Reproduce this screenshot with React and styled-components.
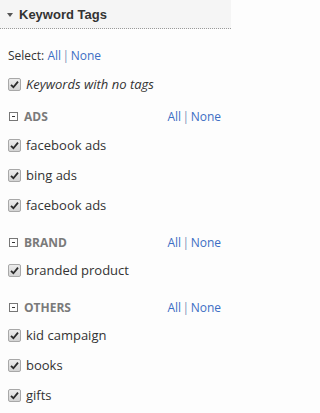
import React from "react";
import styled, { createGlobalStyle } from "styled-components";

const GlobalStyle = createGlobalStyle`
  html, body {
    margin: 0;
    padding: 0;
    background: #fdfdfd;
  }
  body {
    font-family: "Open Sans", "Liberation Sans", Arial, sans-serif;
    color: #333;
  }
`;

const Panel = styled.div`
  width: 231px;
  min-height: 413px;
  background: #fdfdfd;
`;

const PanelHeader = styled.div`
  height: 29px;
  background: #f5f5f5;
  border-bottom: 1px dotted #9a9a9a;
  display: flex;
  align-items: center;
  padding-left: 7px;
  box-sizing: border-box;
`;

const Caret = styled.span`
  width: 0;
  height: 0;
  border-left: 3.5px solid transparent;
  border-right: 3.5px solid transparent;
  border-top: 4px solid #555;
  margin-right: 6px;
  margin-top: 1px;
`;

const HeaderTitle = styled.h3`
  margin: 0;
  font-family: "Liberation Sans", Arial, sans-serif;
  font-weight: 700;
  font-size: 13px;
  color: #333;
`;

const Body = styled.div`
  padding: 16px 10px 0 8px;
`;

const SelectRow = styled.div`
  height: 20px;
  margin-bottom: 4px;
  display: flex;
  align-items: center;
  font-size: 12px;
`;

const Link = styled.a`
  color: #3c6ec4;
  text-decoration: none;
  cursor: pointer;
`;

const Sep = styled.span`
  color: #7e8fb5;
  margin: 0 1.5px;
`;

const Row = styled.label`
  height: 30px;
  display: flex;
  align-items: center;
  gap: 5px;
  font-size: 13px;
  font-style: ${(p) => (p.$italic ? "italic" : "normal")};
  color: #333;
  cursor: pointer;
`;

const Box = styled.span`
  width: 11px;
  height: 11px;
  border: 1px solid #a8a8a8;
  border-radius: 2px;
  background: linear-gradient(#ececec, #d4d4d4);
  display: flex;
  align-items: center;
  justify-content: center;
  flex-shrink: 0;
`;

const Section = styled.section`
  margin-top: ${(p) => (p.$first ? "4px" : "8px")};
`;

const SectionHead = styled.div`
  height: 27px;
  padding-top: ${(p) => (p.$first ? "0" : "2px")};
  box-sizing: border-box;
  display: flex;
  align-items: center;
  justify-content: space-between;
`;

const HeadLeft = styled.div`
  display: flex;
  align-items: center;
  gap: 6px;
  padding-left: 1px;
`;

const Toggle = styled.span`
  width: 7px;
  height: 7px;
  border: 1px solid #777;
  display: flex;
  align-items: center;
  justify-content: center;
  &::after {
    content: "";
    width: 3px;
    height: 1px;
    background: #333;
  }
`;

const SectionTitle = styled.span`
  font-weight: 700;
  font-size: 12px;
  color: #7a7a7a;
`;

const HeadLinks = styled.div`
  font-size: 12px;
  display: flex;
  align-items: center;
`;

function Check() {
  return (
    <Box>
      <svg width="9" height="9" viewBox="0 0 9 9">
        <path d="M1 4.8 L3.4 7.2 L8 1.6" fill="none" stroke="#2b2b2b" strokeWidth="1.8" />
      </svg>
    </Box>
  );
}

const groups = [
  { name: "ADS", items: ["facebook ads", "bing ads", "facebook ads"] },
  { name: "BRAND", items: ["branded product"] },
  { name: "OTHERS", items: ["kid campaign", "books", "gifts"] },
];

export default function App() {
  return (
    <Panel>
      <GlobalStyle />
      <PanelHeader>
        <Caret />
        <HeaderTitle>Keyword Tags</HeaderTitle>
      </PanelHeader>
      <Body>
        <SelectRow>
          Select:&nbsp;<Link>All</Link>
          <Sep>|</Sep>
          <Link>None</Link>
        </SelectRow>
        <Row $italic>
          <Check />
          Keywords with no tags
        </Row>
        {groups.map((g, i) => (
          <Section key={g.name} $first={i === 0}>
            <SectionHead $first={i === 0}>
              <HeadLeft>
                <Toggle />
                <SectionTitle>{g.name}</SectionTitle>
              </HeadLeft>
              <HeadLinks>
                <Link>All</Link>
                <Sep>|</Sep>
                <Link>None</Link>
              </HeadLinks>
            </SectionHead>
            {g.items.map((item, j) => (
              <Row key={j}>
                <Check />
                {item}
              </Row>
            ))}
          </Section>
        ))}
      </Body>
    </Panel>
  );
}
